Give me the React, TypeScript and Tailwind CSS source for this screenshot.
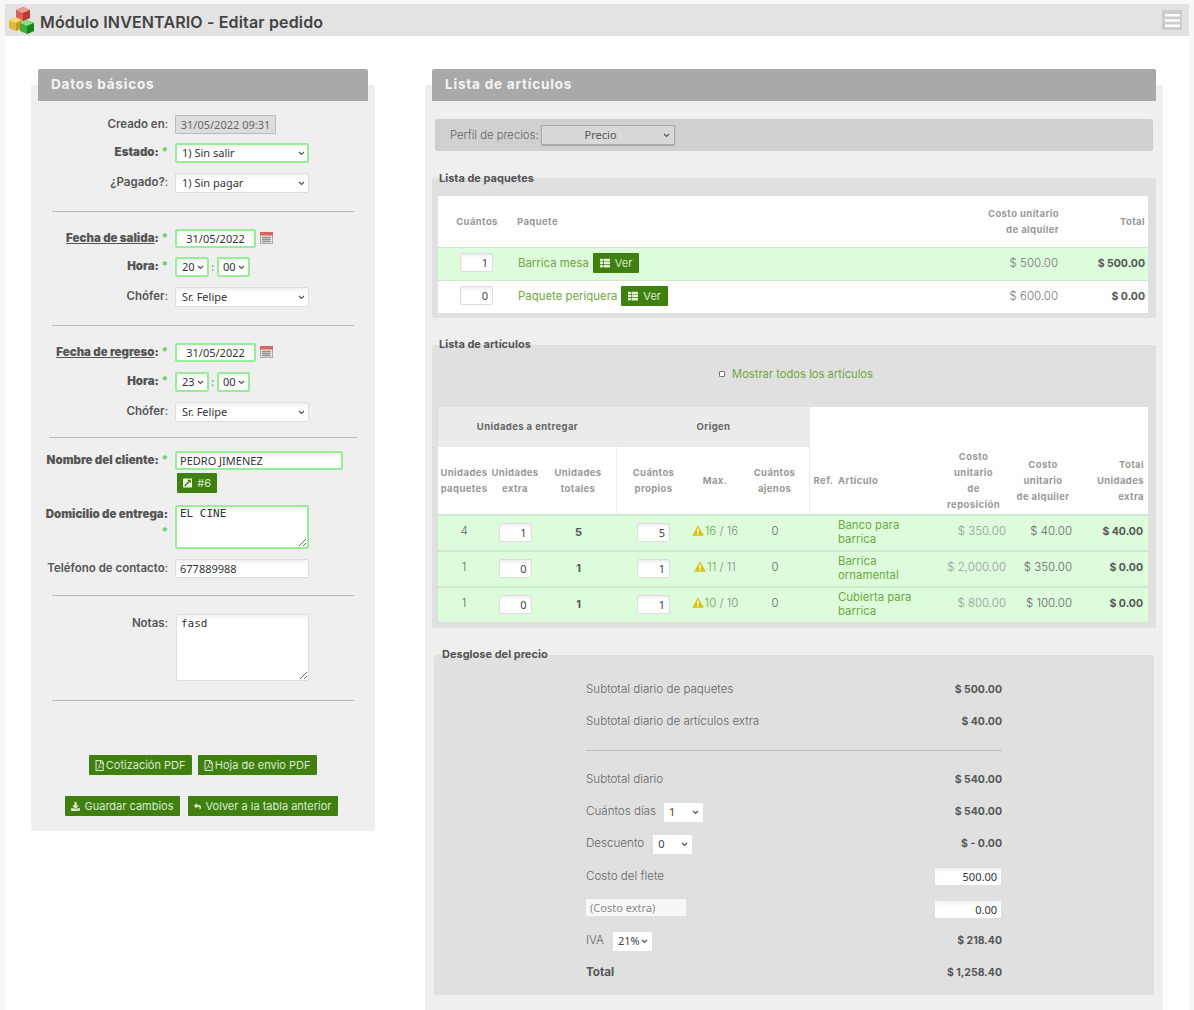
import React from "react";
import { FaBars, FaDownload, FaExternalLinkSquareAlt, FaRegFilePdf, FaReply, FaThList } from "react-icons/fa";

const sans = "[font-family:'Noto_Sans','Open_Sans',sans-serif]";

function Logo() {
  return (
    <svg width="27" height="27" viewBox="0 0 27 27" className="shrink-0">
      <path d="M8 3l7-3 7 3v8l-7 3-7-3z" fill="#d9615a" />
      <path d="M8 3l7 3 7-3-7-3z" fill="#ef9a90" />
      <path d="M15 6l7-3v8l-7 3z" fill="#b83a32" />
      <path d="M1 13l6-3 7 3v8l-6 3-7-3z" fill="#e0b83a" />
      <path d="M1 13l7 3 6-3-7-3z" fill="#f5dc7a" />
      <path d="M8 16l6-3v8l-6 3z" fill="#c9981f" />
      <path d="M12 16l7-3 7 3v8l-7 3-7-3z" fill="#3fae3a" />
      <path d="M12 16l7 3 7-3-7-3z" fill="#8ade78" />
      <path d="M19 19l7-3v8l-7 3z" fill="#16851d" />
    </svg>
  );
}

function Calendar() {
  return (
    <svg width="13" height="12" viewBox="0 0 13 12" className="ml-[4px] mt-[3px] shrink-0">
      <rect x="0.5" y="0.5" width="12" height="11" fill="#e4e4e4" stroke="#aaa" />
      <rect x="0" y="0" width="13" height="3.5" fill="#d9655b" />
      <path d="M2 5.5h9M2 7.5h9M2 9.5h9M3 4.5v6M5 4.5v6M7 4.5v6M9 4.5v6" stroke="#888" strokeWidth="0.8" />
    </svg>
  );
}

function Warn() {
  return (
    <svg width="12" height="11" viewBox="0 0 12 11" className="inline-block align-[-1px] mr-[1px]">
      <path d="M6 0.5L11.8 10.8H0.2z" fill="#d8c10f" />
      <rect x="5.3" y="3.6" width="1.4" height="3.8" fill="#fff" />
      <rect x="5.3" y="8.1" width="1.4" height="1.4" fill="#fff" />
    </svg>
  );
}

function Chevron({ right }: { right: string }) {
  return (
    <svg width="7" height="5" viewBox="0 0 7 5" className={`absolute top-1/2 -mt-[2px] pointer-events-none ${right}`}>
      <path d="M1 1l2.5 2.5L6 1" fill="none" stroke="#555" strokeWidth="1.2" />
    </svg>
  );
}

function Label({ children, bold, req, under, wrap }: { children: string; bold?: boolean; req?: boolean; under?: boolean; wrap?: boolean }) {
  return (
    <div className={`w-[137px] shrink-0 text-right text-[11.5px] leading-[18px] text-[#555] whitespace-nowrap ${bold ? "font-black" : "font-semibold"}`}>
      <span className={under ? "underline" : ""}>{children}</span>
      {bold && <span>:</span>}
      {!bold && <span className="font-normal">:</span>}
      {wrap && <br />}
      {req && <span className="text-[#5fd05f] font-bold"> *</span>}
    </div>
  );
}

const inputBase = `${sans} bg-white text-[#333] text-[11px] font-normal shadow-[inset_0_4px_5px_-2px_#eee]`;
const green = "border-2 border-[#98ee98] rounded-[2px]";
const plain = "border border-[#e0e0e0] rounded-[1px]";

function Sel({ value, w, req, pad = "pl-[5px]", arrow = "right-[4px]" }: { value: string; w: string; req?: boolean; pad?: string; arrow?: string }) {
  return (
    <span className={`relative block ${w} h-[20px]`}>
      <select defaultValue={value} className={`${inputBase} appearance-none block w-full h-full ${pad} ${req ? green : plain}`}>
        <option>{value}</option>
      </select>
      <Chevron right={arrow} />
    </span>
  );
}

function Row({ label, bold, req, under, wrap, mt, children }: { label: string; bold?: boolean; req?: boolean; under?: boolean; wrap?: boolean; mt: string; children: React.ReactNode }) {
  return (
    <div className={`flex items-start ${mt}`}>
      <Label bold={bold} req={req} under={under} wrap={wrap}>{label}</Label>
      <div className="ml-[7px] flex items-start">{children}</div>
    </div>
  );
}

function Btn({ icon, children, cls = "" }: { icon: React.ReactNode; children: string; cls?: string }) {
  return (
    <button className={`h-[20px] px-[6px] flex items-center justify-center rounded-[1px] bg-[#3f8010] text-[#dcebd0] text-[11px] whitespace-nowrap ${cls}`}>
      {icon}
      <span>{children}</span>
    </button>
  );
}

function Time({ h, mt }: { h: string; mt: string }) {
  return (
    <Row label="Hora" bold req mt={mt}>
      <Sel value={h} w="w-[34px]" req arrow="right-[5px]" />
      <span className="mx-[2px] w-[4px] text-[#777] text-[11px] leading-[20px]">:</span>
      <Sel value="00" w="w-[33px]" req pad="pl-[4px]" arrow="right-[5px]" />
    </Row>
  );
}

function DateInput() {
  return (
    <>
      <input readOnly value="31/05/2022" className={`${inputBase} ${green} w-[81px] h-[19px] text-center`} />
      <Calendar />
    </>
  );
}

function Qty({ v, cls = "" }: { v: string; cls?: string }) {
  return <input readOnly value={v} className={`${sans} w-[33px] h-[19px] bg-white text-[#444] text-[11px] text-right pr-[4px] border border-[#ddd] rounded-[2px] shadow-[inset_0_3px_4px_-2px_#e4e4e4] ${cls}`} />;
}

function Legend({ children, cls }: { children: string; cls: string }) {
  return <div className={`text-[11px] font-bold text-[#555] leading-[14px] relative h-0 ${cls}`}>{children}</div>;
}

function Ver() {
  return (
    <Btn cls="ml-[4px] mb-[2px] gap-[5px] !px-[7px]" icon={<FaThList size={10} className="text-[#e8f2df]" />}>
      Ver
    </Btn>
  );
}

const th = "text-[9.5px] font-bold text-[#999] leading-[16px] tracking-[0.4px]";

function Pack({ q, name, price, total, on, h }: { q: string; name: string; price: string; total: string; on?: boolean; h: string }) {
  return (
    <div className={`flex items-center ${h} ${on ? "bg-[#dcfcdc] border-y border-[#cfe8cf]" : ""}`}>
      <div className="w-[22px]" />
      <Qty v={q} cls="mb-[4px]" />
      <div className="ml-[25px] flex items-center flex-1 text-[11.4px] text-[#6fa83f]">
        {name}
        <Ver />
      </div>
      <div className="w-[90px] pr-[3px] text-right text-[11.5px] font-light text-[#777]">{price}</div>
      <div className="w-[87px] pr-[3px] text-right text-[10.5px] font-bold text-[#555]">{total}</div>
    </div>
  );
}

function Art({ a, e, t, p, warn, max, name1, name2, rep, alq, tot }: { a: string; e: string; t: string; p: string; warn: string; max: string; name1: string; name2: string; rep: string; alq: string; tot: string }) {
  return (
    <div className="flex items-center h-[36px] bg-[#dcfcdc] shadow-[inset_0_2px_0_#cfe8cf]">
      <div className="w-[52px] text-center text-[11.5px] font-light text-[#666]">{a}</div>
      <div className="w-[50px] flex justify-center"><Qty v={e} /></div>
      <div className="w-[77px] text-center text-[11px] font-bold text-[#555]">{t}</div>
      <div className="w-[73px] flex justify-center"><Qty v={p} /></div>
      <div className="w-[50px] text-center text-[11.5px] font-light whitespace-nowrap text-[#888]">
        <Warn />
        <span className="text-[#6fa83f]">{warn}</span> / {max}
      </div>
      <div className="w-[70px] text-center text-[11.5px] font-light text-[#666]">0</div>
      <div className="w-[27px]" />
      <div className="w-[100px] pl-[1px] text-[11.4px] leading-[14px] text-[#6fa83f]">
        {name1}
        <br />
        {name2}
      </div>
      <div className="w-[69px] text-right text-[11.5px] font-light text-[#999] whitespace-nowrap">{rep}</div>
      <div className="w-[66px] text-right text-[11.5px] font-light text-[#666]">{alq}</div>
      <div className="w-[74px] pr-[3px] text-right text-[10.5px] font-bold text-[#555]">{tot}</div>
    </div>
  );
}

function Sum({ label, value, h = "h-[32px]", children, bold }: { label?: string; value?: React.ReactNode; h?: string; children?: React.ReactNode; bold?: boolean }) {
  return (
    <div className={`flex items-center justify-between pt-[2px] ${h}`}>
      <div className={`flex items-center text-[11.6px] ${bold ? "font-bold text-[#555]" : "font-light text-[#666]"}`}>
        {label}
        {children}
      </div>
      <div className="text-[10.5px] font-bold text-[#555]">{value}</div>
    </div>
  );
}

function MiniSel({ v, w, ml }: { v: string; w: string; ml: string }) {
  return (
    <span className={`relative block ${w} ${ml} h-[19px]`}>
      <select defaultValue={v} className={`${sans} appearance-none block w-full h-full bg-white text-[#444] text-[11px] font-normal pl-[5px]`}>
        <option>{v}</option>
      </select>
      <Chevron right="right-[4px]" />
    </span>
  );
}

function MoneyInput({ v }: { v: string }) {
  return <input readOnly value={v} className={`${inputBase} block w-[66px] h-[17px] mr-[1px] text-right pr-[4px]`} />;
}

export default function App() {
  return (
    <div className="h-[1010px] overflow-hidden bg-[#f7f7f7] pt-[4px] px-[5px] [font-family:Inter,sans-serif] flex flex-col">
      <header className="h-[32px] shrink-0 bg-[#e3e3e3] flex items-center pl-[3px] pr-[7px]">
        <Logo />
        <h1 className="ml-[5px] pt-[4px] text-[16px] tracking-[0.15px] font-semibold text-[#444] flex-1 whitespace-nowrap">Módulo INVENTARIO - Editar pedido</h1>
        <div className="w-[20px] h-[20px] bg-[#ccc] flex items-center justify-center">
          <FaBars size={17} className="text-white" />
        </div>
      </header>

      <main className="flex-1 bg-white flex pt-[49px] pl-[26px] items-stretch">
        <section className="w-[344px] h-[746px] bg-[#efefef] rounded-[2px]">
          <div className="-mt-[16px] mx-[7px] h-[32px] pb-[1px] bg-[#a9a9a9] rounded-t-[2px] flex items-center pl-[13px] text-[13.5px] font-bold tracking-[0.8px] text-[#f4f4f4]">Datos básicos</div>

          <Row label="Creado en" mt="mt-[14px]">
            <div className={`${sans} w-[101px] h-[19px] bg-[#ddd] border border-[#bbb] rounded-[1px] text-[11px] leading-[17px] text-center text-[#666]`}>31/05/2022 09:31</div>
          </Row>
          <Row label="Estado" bold req mt="mt-[9px]"><Sel value="1) Sin salir" w="w-[134px]" req /></Row>
          <Row label="¿Pagado?" mt="mt-[10px]"><Sel value="1) Sin pagar" w="w-[134px]" pad="pl-[6px]" /></Row>
          <hr className="mt-[18px] mx-[21px] border-[#bbb]" />

          <Row label="Fecha de salida" bold req under mt="mt-[17px]"><DateInput /></Row>
          <Time h="20" mt="mt-[9px]" />
          <Row label="Chófer" mt="mt-[10px]"><Sel value="Sr. Felipe" w="w-[134px]" pad="pl-[6px]" /></Row>
          <hr className="mt-[18px] mx-[21px] border-[#bbb]" />

          <Row label="Fecha de regreso" bold req under mt="mt-[17px]"><DateInput /></Row>
          <Time h="23" mt="mt-[10px]" />
          <Row label="Chófer" mt="mt-[10px]"><Sel value="Sr. Felipe" w="w-[134px]" pad="pl-[6px]" /></Row>
          <hr className="mt-[15px] mx-[18px] border-[#bbb]" />

          <Row label="Nombre del cliente" bold req mt="mt-[13px]">
            <div>
              <input readOnly value="PEDRO JIMENEZ" className={`${inputBase} ${green} block w-[168px] h-[19px] pl-[3px]`} />
              <Btn cls="mt-[3px] ml-[2px] w-[40px] gap-[5px]" icon={<FaExternalLinkSquareAlt size={14} className="text-[#e8f2df]" />}>#6</Btn>
            </div>
          </Row>
          <Row label="Domicilio de entrega" bold req wrap mt="mt-[12px]">
            <textarea readOnly value="EL CINE" className={`block ${green} w-[134px] h-[44px] bg-white pl-[3px] text-[11px] leading-[14px] text-[#333] [font-family:'DejaVu_Sans_Mono',monospace] shadow-[inset_0_4px_5px_-2px_#eee]`} />
          </Row>
          <Row label="Teléfono de contacto" mt="mt-[10px]">
            <input readOnly value="677889988" className={`${inputBase} ${plain} w-[134px] h-[19px] pl-[4px]`} />
          </Row>
          <hr className="mt-[17px] mx-[21px] border-[#bbb]" />

          <Row label="Notas" mt="mt-[18px]">
            <textarea readOnly value="fasd" className={`block ${plain} ml-[1px] w-[133px] h-[67px] bg-white pl-[4px] pt-[2px] text-[11px] leading-[14px] text-[#333] [font-family:'DejaVu_Sans_Mono',monospace] shadow-[inset_0_4px_5px_-2px_#eee]`} />
          </Row>
          <hr className="mt-[19px] mx-[21px] border-[#bbb]" />

          <div className="mt-[54px] flex justify-center gap-[6px] ml-[-1px]">
            <Btn cls="w-[103px] gap-[2px]" icon={<FaRegFilePdf size={11} />}>Cotización PDF</Btn>
            <Btn cls="w-[119px] gap-[2px]" icon={<FaRegFilePdf size={11} />}>Hoja de envio PDF</Btn>
          </div>
          <div className="mt-[21px] flex justify-center gap-[8px] ml-[-4px]">
            <Btn cls="w-[115px] gap-[5px]" icon={<FaDownload size={11} />}>Guardar cambios</Btn>
            <Btn cls="w-[150px] gap-[5px]" icon={<FaReply size={13} />}>Volver a la tabla anterior</Btn>
          </div>
        </section>

        <section className="ml-[50px] w-[738px] bg-[#efefef] rounded-t-[2px]">
          <div className="-mt-[16px] mx-[7px] h-[32px] pb-[1px] bg-[#a9a9a9] rounded-t-[2px] flex items-center pl-[13px] text-[13.5px] font-bold tracking-[0.8px] text-[#f4f4f4]">Lista de artículos</div>

          <div className="mt-[18px] ml-[10px] w-[718px] h-[32px] bg-[#d0d0d0] rounded-[2px] flex items-center pl-[15px] text-[11.3px] font-light text-[#666]">
            Perfil de precios:
            <span className="relative block ml-[2px] w-[134px] h-[20px]">
              <select defaultValue="Precio" className={`${sans} appearance-none block w-full h-full bg-[#d8d8d8] border border-[#aaa] text-center pr-[14px] text-[11px] font-normal text-[#555] shadow-[0_1px_1px_#aaa]`}>
                <option>Precio</option>
              </select>
              <Chevron right="right-[5px]" />
            </span>
          </div>

          <div className="mt-[27px] ml-[7px] w-[724px] h-[140px] bg-[#e0e0e0] pl-[6px] rounded-[2px]">
            <Legend cls="top-[-7px] pl-[1px]">Lista de paquetes</Legend>
            <div className="pt-[18px]">
              <div className="w-[710px] bg-white">
                <div className={`flex items-center h-[51px] pt-[1px] ${th}`}>
                  <div className="w-[78px] text-center">Cuántos</div>
                  <div className="flex-1 pl-[1px] text-left">Paquete</div>
                  <div className="w-[110px] text-right">Costo unitario<br />de alquiler</div>
                  <div className="w-[89px] text-right pr-[3px]">Total</div>
                </div>
                <Pack q="1" name="Barrica mesa" price="$ 500.00" total="$ 500.00" on h="h-[34px]" />
                <Pack q="0" name="Paquete periquera" price="$ 600.00" total="$ 0.00" h="h-[32px]" />
              </div>
            </div>
          </div>

          <div className="mt-[27px] ml-[7px] w-[724px] h-[283px] bg-[#e0e0e0] pl-[6px] rounded-[2px]">
            <Legend cls="top-[-8px] pl-[1px]">Lista de artículos</Legend>
            <label className="h-[62px] pb-[4px] pr-[2px] flex items-center justify-center text-[11.2px] text-[#6fa83f]">
              <span className="w-[6px] h-[6px] border border-[#777] rounded-[1px] bg-white mr-[7px]" />
              Mostrar todos los artículos
            </label>
            <div className="w-[710px] bg-white">
              <div className="flex h-[40px] pt-[1px] w-[372px] bg-[#ebebeb] text-[9.5px] font-bold text-[#666] tracking-[0.4px] items-center">
                <div className="w-[179px] text-center">Unidades a entregar</div>
                <div className="w-[193px] text-center">Origen</div>
              </div>
              <div className={`flex items-center h-[67px] text-center ${th}`}>
                <div className="w-[52px]">Unidades<br />paquetes</div>
                <div className="w-[50px]">Unidades<br />extra</div>
                <div className="w-[77px] self-stretch flex items-center justify-center border-r border-[#eee]"><span>Unidades<br />totales</span></div>
                <div className="w-[73px]">Cuántos<br />propios</div>
                <div className="w-[50px]">Max.</div>
                <div className="w-[70px] self-stretch flex items-center justify-center border-r border-[#eee]"><span>Cuántos<br />ajenos</span></div>
                <div className="w-[27px]">Ref.</div>
                <div className="w-[100px] pl-[1px] text-left">Artículo</div>
                <div className="w-[69px] pl-[4px]">Costo<br />unitario<br />de<br />reposición</div>
                <div className="w-[66px] pl-[8px]">Costo<br />unitario<br />de alquiler</div>
                <div className="w-[74px] text-right pr-[2px]">Total<br />Unidades<br />extra</div>
              </div>
              <Art a="4" e="1" t="5" p="5" warn="16" max="16" name1="Banco para" name2="barrica" rep="$ 350.00" alq="$ 40.00" tot="$ 40.00" />
              <Art a="1" e="0" t="1" p="1" warn="11" max="11" name1="Barrica" name2="ornamental" rep="$ 2,000.00" alq="$ 350.00" tot="$ 0.00" />
              <Art a="1" e="0" t="1" p="1" warn="10" max="10" name1="Cubierta para" name2="barrica" rep="$ 800.00" alq="$ 100.00" tot="$ 0.00" />
            </div>
          </div>

          <div className="mt-[27px] ml-[9px] w-[720px] h-[340px] bg-[#e0e0e0] rounded-[2px] pl-[152px] pr-[152px]">
            <Legend cls="top-[-8px] -ml-[144px]">Desglose del precio</Legend>
            <div className="pt-[18px]">
              <Sum label="Subtotal diario de paquetes" value="$ 500.00" />
              <Sum label="Subtotal diario de artículos extra" value="$ 40.00" />
              <hr className="mt-[13px] mb-[12px] border-[#bbb]" />
              <Sum label="Subtotal diario" value="$ 540.00" />
              <Sum label="Cuántos días" value="$ 540.00"><MiniSel v="1" w="w-[39px]" ml="ml-[8px]" /></Sum>
              <Sum label="Descuento" value="$ - 0.00"><MiniSel v="0" w="w-[39px]" ml="ml-[9px]" /></Sum>
              <Sum label="Costo del flete" value={<MoneyInput v="500.00" />} h="h-[33px]" />
              <Sum value={<MoneyInput v="0.00" />} h="h-[33px]">
                <input readOnly placeholder="(Costo extra)" className={`${sans} w-[100px] h-[17px] mb-[4px] bg-[#f8f8f8] pl-[4px] text-[11px] font-normal placeholder:text-[#888]`} />
              </Sum>
              <Sum label="IVA" value="$ 218.40" h="h-[30px]"><MiniSel v="21%" w="w-[39px]" ml="ml-[9px]" /></Sum>
              <Sum label="Total" value="$ 1,258.40" h="h-[34px]" bold />
            </div>
          </div>
        </section>
      </main>
    </div>
  );
}
